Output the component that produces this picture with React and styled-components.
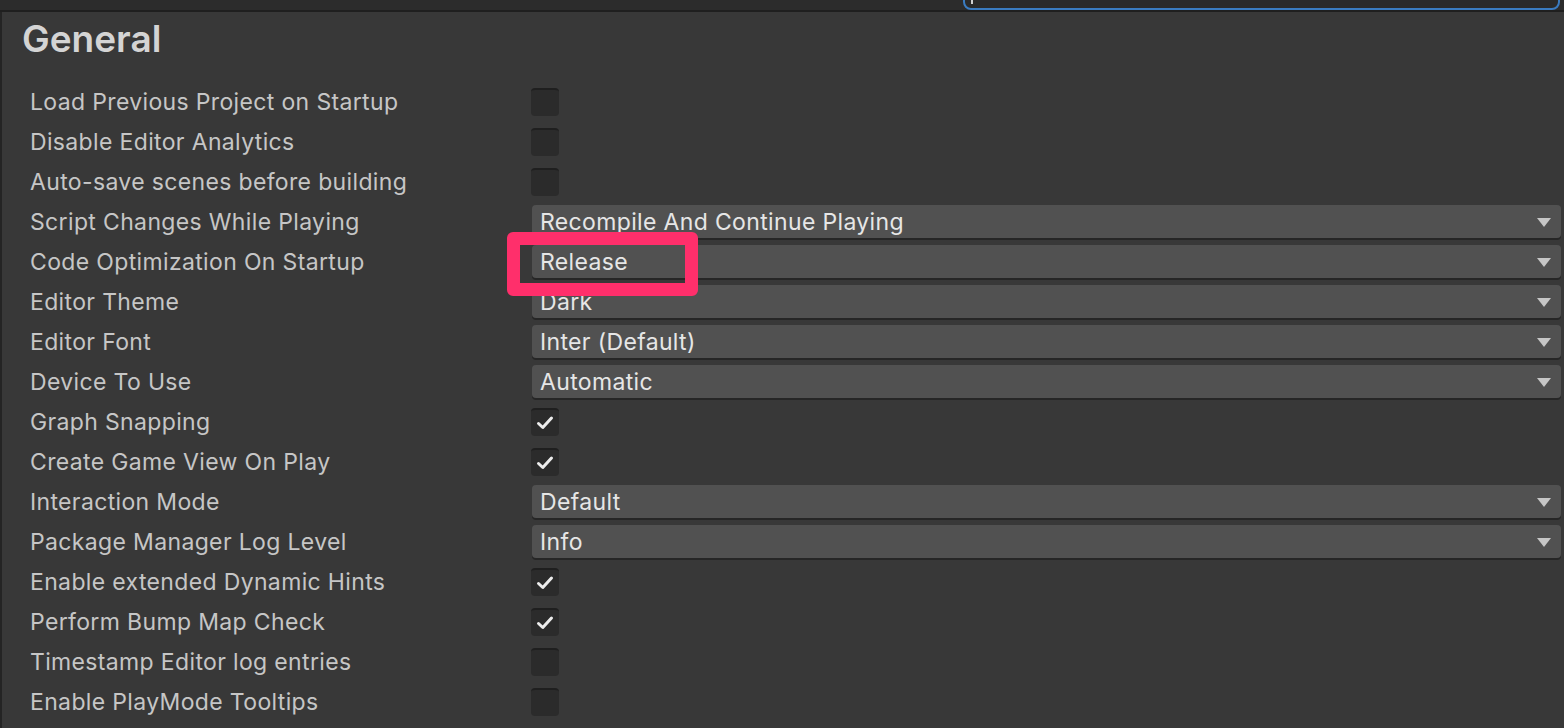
import React from 'react'
import styled, { createGlobalStyle } from 'styled-components'

const GlobalStyle = createGlobalStyle`
	html, body {
		margin: 0;
		padding: 0;
		background: #383838;
		font-family: Inter, "Noto Sans", sans-serif;
		overflow: hidden;
	}
`

const Page = styled.div`
	width: 1564px;
	height: 728px;
	display: flex;
	flex-direction: column;
	background: #383838;
`

const Toolbar = styled.div`
	height: 10px;
	display: flex;
	justify-content: flex-end;
	padding-right: 4px;
	background: #2c2c2c;
	border-bottom: 2px solid #1f1f1f;
	overflow: hidden;
`

const SearchField = styled.div`
	position: relative;
	width: 593px;
	height: 20px;
	margin-top: -14px;
	border: 2px solid #3a7bc0;
	border-radius: 8px;
	background: #2a2a2a;
	&::after {
		content: '';
		position: absolute;
		left: 6px;
		top: 10px;
		width: 2px;
		height: 6px;
		background: #d0d0d0;
	}
`

const Panel = styled.div`
	position: relative;
	flex: 1;
	border-left: 2px solid #242424;
	padding: 0 3px 0 0;
`

const Title = styled.h1`
	margin: 0;
	height: 70px;
	padding-left: 20px;
	padding-bottom: 18px;
	display: flex;
	align-items: center;
	box-sizing: border-box;
	font-size: 37px;
	font-weight: 600;
	color: #d4d4d4;
`

const List = styled.div`
	display: flex;
	flex-direction: column;
`

const Row = styled.div`
	height: 40px;
	display: grid;
	grid-template-columns: 530px 1fr;
	align-items: center;
`

const Label = styled.div`
	padding-left: 28px;
	font-size: 23px;
	letter-spacing: 0.35px;
	color: #c6c6c6;
	white-space: nowrap;
`

const Check = styled.div`
	width: 28px;
	height: 28px;
	margin-left: -1px;
	box-sizing: border-box;
	border-radius: 4px;
	background: #2b2b2b;
	border-top: 2px solid #1f1f1f;
	display: flex;
	align-items: center;
	justify-content: center;
`

const Dropdown = styled.div`
	height: 33px;
	margin-top: -1px;
	border-radius: 4px;
	background: #515151;
	box-shadow: 0 2px 0 #262626;
	display: flex;
	align-items: center;
	justify-content: space-between;
	padding: 0 10px 0 8px;
	font-size: 23px;
	letter-spacing: 0.35px;
	color: #e6e6e6;
`

const Arrow = styled.span`
	width: 0;
	height: 0;
	border-left: 7px solid transparent;
	border-right: 7px solid transparent;
	border-top: 9px solid #c6c6c6;
	margin-top: 2px;
`

const Highlight = styled.div`
	position: absolute;
	left: 505px;
	top: 220px;
	width: 191px;
	height: 64px;
	box-sizing: border-box;
	border: 13px solid #ff2f6b;
	border-radius: 6px;
	pointer-events: none;
`

const CheckMark = () => (
	<svg width="22" height="22" viewBox="0 0 22 22">
		<path d="M4.5 11.5 L8.8 15.5 L17.5 6" fill="none" stroke="#ececec" strokeWidth="3" strokeLinecap="round" strokeLinejoin="round" />
	</svg>
)

const rows = [
	{ label: 'Load Previous Project on Startup', type: 'check', on: false },
	{ label: 'Disable Editor Analytics', type: 'check', on: false },
	{ label: 'Auto-save scenes before building', type: 'check', on: false },
	{ label: 'Script Changes While Playing', type: 'select', value: 'Recompile And Continue Playing' },
	{ label: 'Code Optimization On Startup', type: 'select', value: 'Release' },
	{ label: 'Editor Theme', type: 'select', value: 'Dark' },
	{ label: 'Editor Font', type: 'select', value: 'Inter (Default)' },
	{ label: 'Device To Use', type: 'select', value: 'Automatic' },
	{ label: 'Graph Snapping', type: 'check', on: true },
	{ label: 'Create Game View On Play', type: 'check', on: true },
	{ label: 'Interaction Mode', type: 'select', value: 'Default' },
	{ label: 'Package Manager Log Level', type: 'select', value: 'Info' },
	{ label: 'Enable extended Dynamic Hints', type: 'check', on: true },
	{ label: 'Perform Bump Map Check', type: 'check', on: true },
	{ label: 'Timestamp Editor log entries', type: 'check', on: false },
	{ label: 'Enable PlayMode Tooltips', type: 'check', on: false }
]

const App = () => {
	return (
		<Page>
			<GlobalStyle />
			<Toolbar>
				<SearchField />
			</Toolbar>
			<Panel>
				<Title>General</Title>
				<List>
					{rows.map(row => (
						<Row key={row.label}>
							<Label>{row.label}</Label>
							{row.type === 'check' ? (
								<Check>{row.on && <CheckMark />}</Check>
							) : (
								<Dropdown>
									<span>{row.value}</span>
									<Arrow />
								</Dropdown>
							)}
						</Row>
					))}
				</List>
				<Highlight />
			</Panel>
		</Page>
	)
}

export default App
